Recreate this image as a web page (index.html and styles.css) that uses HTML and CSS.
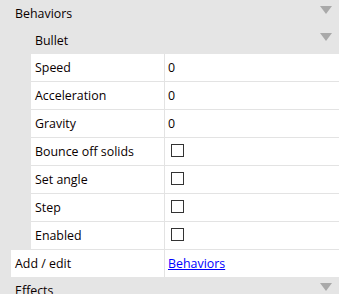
FILE: index.html
```html
<!DOCTYPE html>
<html lang="en">
  <head>
    <meta charset="UTF-8" />
    <meta name="viewport" content="width=device-width, initial-scale=1.0" />
    <title>Properties</title>
    <link rel="stylesheet" href="styles.css">
  </head>
  <body>
    <div class="panel">
      <div class="group-head">
        <span>Behaviors</span>
        <span class="arrow"></span>
      </div>

      <div class="sub-head">
        <span>Bullet</span>
        <span class="arrow"></span>
      </div>

      <div class="props">
        <div class="prop">
          <div class="prop-name">Speed</div>
          <div class="prop-value">0</div>
        </div>
        <div class="prop">
          <div class="prop-name">Acceleration</div>
          <div class="prop-value">0</div>
        </div>
        <div class="prop">
          <div class="prop-name">Gravity</div>
          <div class="prop-value">0</div>
        </div>
        <div class="prop">
          <div class="prop-name">Bounce off solids</div>
          <div class="prop-value"><span class="check"></span></div>
        </div>
        <div class="prop">
          <div class="prop-name">Set angle</div>
          <div class="prop-value"><span class="check"></span></div>
        </div>
        <div class="prop">
          <div class="prop-name">Step</div>
          <div class="prop-value"><span class="check"></span></div>
        </div>
        <div class="prop">
          <div class="prop-name">Enabled</div>
          <div class="prop-value"><span class="check"></span></div>
        </div>
      </div>

      <div class="prop prop-top">
        <div class="prop-name">Add / edit</div>
        <div class="prop-value"><a href="#">Behaviors</a></div>
      </div>

      <div class="group-head">
        <span>Effects</span>
        <span class="arrow"></span>
      </div>
    </div>
  </body>
</html>
```

FILE: styles.css
```css
body {
  margin: 0;
  background-color: #e5e5e5;
  font-family: "Open Sans", "Noto Sans", sans-serif;
  font-size: 12.4px;
  color: #0a0000;
}

.panel {
  width: 339px;
}

.group-head,
.sub-head {
  height: 27px;
  display: flex;
  justify-content: space-between;
  align-items: center;
  padding-left: 15px;
  padding-right: 7px;
}

.sub-head {
  padding-left: 35px;
}

.arrow {
  width: 0;
  height: 0;
  border-left: 6px solid transparent;
  border-right: 6px solid transparent;
  border-top: 8px solid #a9a9a9;
  margin-top: -7px;
}

.props {
  margin-left: 31px;
}

.prop {
  display: grid;
  grid-template-columns: 134px 1fr;
  height: 27px;
  background-color: #fff;
  border-bottom: 1px solid #e3e3e3;
}

.prop-top {
  margin-left: 11px;
  grid-template-columns: 154px 1fr;
  border-bottom: none;
}

.prop-name {
  display: flex;
  align-items: center;
  padding-left: 4px;
  border-right: 1px solid #e3e3e3;
}

.prop-value {
  display: flex;
  align-items: center;
  padding-left: 3px;
}

.check {
  width: 11px;
  height: 11px;
  border: 1px solid #333;
  margin-left: 3px;
  margin-top: -3px;
}

.prop-value a {
  color: #0000ff;
}
```
